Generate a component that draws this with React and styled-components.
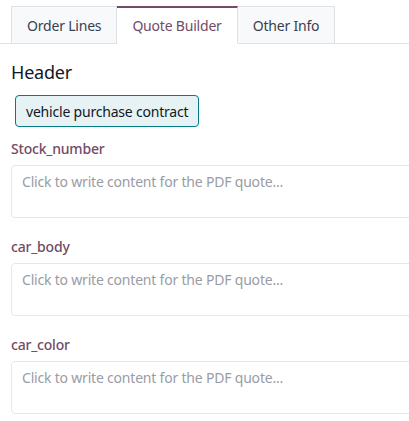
import React from 'react'
import styled, { createGlobalStyle } from 'styled-components'

const GlobalStyle = createGlobalStyle`
  body {
    margin: 0;
    background: #fff;
    font-family: "Noto Sans", "Open Sans", sans-serif;
    letter-spacing: -0.2px;
    color: #1f2328;
  }
`

const Page = styled.div`
  width: 409px;
  height: 421px;
  overflow: hidden;
  padding-top: 6px;
  box-sizing: border-box;
`

const TabBar = styled.div`
  display: flex;
  padding-left: 11px;
  border-bottom: 1px solid #dee2e6;
  width: 420px;
`

const Tab = styled.div`
  height: 38px;
  box-sizing: border-box;
  padding: 0 15px;
  display: flex;
  align-items: center;
  font-size: 14px;
  margin-bottom: -1px;
  color: ${p => (p.$active ? '#714b67' : '#374151')};
  background: ${p => (p.$active ? '#fff' : '#f8f9fa')};
  border: 1px solid #dee2e6;
  border-left-width: ${p => (p.$first ? '1px' : '0')};
  border-top: ${p => (p.$active ? '2px solid #714b67' : '1px solid #dee2e6')};
  border-bottom-color: ${p => (p.$active ? '#fff' : '#dee2e6')};
`

const Content = styled.div`
  padding: 0 0 0 11px;
`

const Title = styled.h2`
  margin: 16px 0 0;
  font-size: 18px;
  font-weight: 400;
  line-height: 24px;
  color: #111827;
`

const Chip = styled.button`
  margin: 11px 0 0 4px;
  height: 32px;
  padding: 0 10px;
  font-family: inherit;
  letter-spacing: inherit;
  font-size: 14px;
  color: #111827;
  background: #e6f2f3;
  border: 1px solid #017e84;
  border-radius: 4px;
`

const Field = styled.div`
  margin-top: 12px;
  & + & { margin-top: 19px; }
`

const Label = styled.div`
  font-size: 14px;
  font-weight: 500;
  color: #714b67;
  line-height: 20px;
`

const Editor = styled.div`
  margin-top: 6px;
  width: 420px;
  height: 53px;
  box-sizing: border-box;
  border: 1px solid #e5e7eb;
  border-radius: 4px;
  padding: 6px 10px;
  font-size: 14px;
  line-height: 20px;
  color: #9a9ca5;
`

const fields = ['Stock_number', 'car_body', 'car_color']

export default function App() {
  return (
    <Page>
      <GlobalStyle />
      <TabBar>
        <Tab $first>Order Lines</Tab>
        <Tab $active>Quote Builder</Tab>
        <Tab>Other Info</Tab>
      </TabBar>
      <Content>
        <Title>Header</Title>
        <Chip>vehicle purchase contract</Chip>
        {fields.map(f => (
          <Field key={f}>
            <Label>{f}</Label>
            <Editor>Click to write content for the PDF quote...</Editor>
          </Field>
        ))}
      </Content>
    </Page>
  )
}
